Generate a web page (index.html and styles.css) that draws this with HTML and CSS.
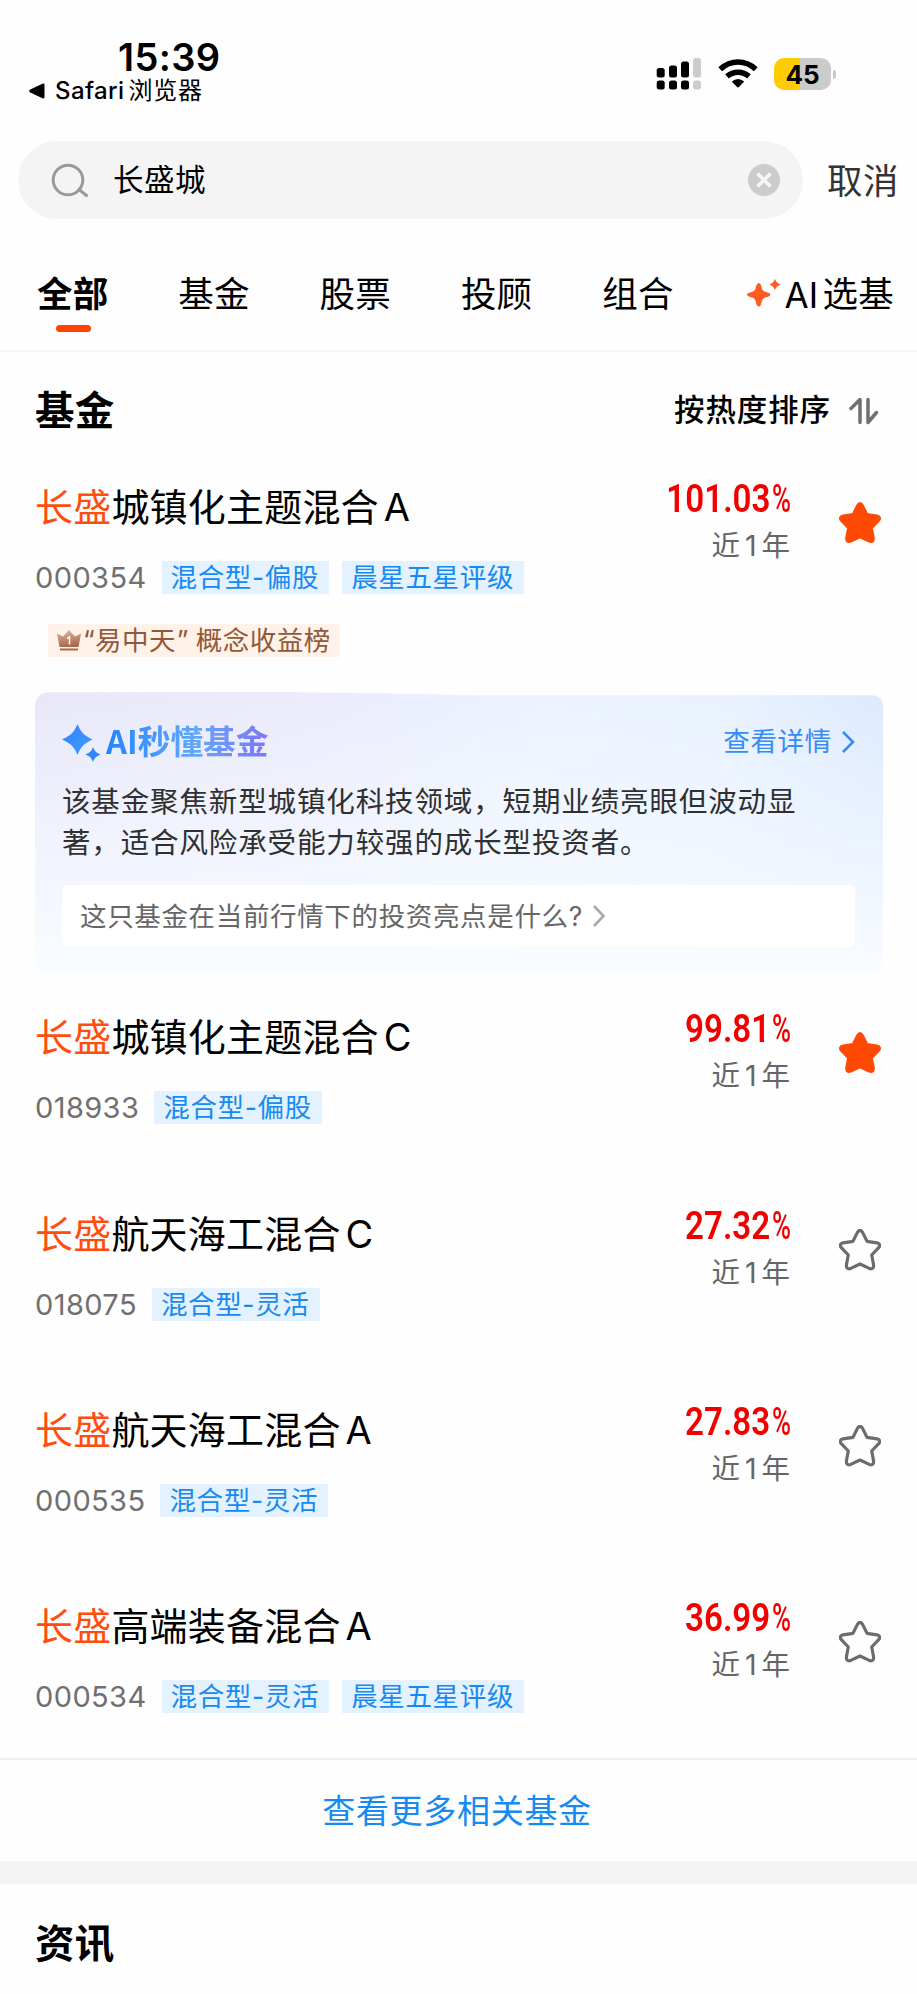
FILE: index.html
```html
<!DOCTYPE html>
<html lang="zh-CN">
<head>
<meta charset="utf-8">
<title>基金搜索</title>
<link rel="stylesheet" href="styles.css">
</head>
<body>
<svg class="defs" width="0" height="0">
  <symbol id="star" viewBox="0 0 42 42"><path d="M18.300 3.600Q21 -1 23.700 3.600L28 12.300L38 13.800Q42.500 15 39.700 18.700L32.700 26L34.600 36Q34.800 41 30.300 39.400L21 35L11.700 39.400Q7.200 41 7.400 36L9.300 26L2.300 18.700Q-.5 15 4 13.800L14 12.300Z"/></symbol>
</svg>
<header class="status">
  <div class="status-left">
    <div class="clock">15:39</div>
    <div class="back"><svg width="16" height="16" viewBox="0 0 16 16"><path d="M1.200 6.600L13.500.7Q15.500 0 15.500 2V14Q15.500 16 13.500 15.300L1.200 9.400Q-.8 8 1.200 6.600Z"/></svg><span class="safari">Safari</span><span class="app">浏览器</span></div>
  </div>
  <div class="status-right">
    <svg class="signal" width="46" height="32" viewBox="0 0 46 32">
      <rect x=".7" y="10" width="8" height="9.500" rx="2.500"/><rect x="13" y="7.500" width="8" height="12" rx="2.500"/><rect x="25" y="3.500" width="8" height="16" rx="2.500"/><rect class="dim" x="37" y="0" width="8" height="19.500" rx="2.500"/>
      <rect x=".7" y="22.500" width="8" height="9" rx="2.500"/><rect x="13" y="22.500" width="8" height="9" rx="2.500"/><rect x="25" y="22.500" width="8" height="9" rx="2.500"/><rect class="dim" x="37" y="22.500" width="8" height="9" rx="2.500"/>
    </svg>
    <svg class="wifi" width="40" height="30" viewBox="0 0 40 30"><path class="arc" d="M2.200 10.200Q10.200 3 20 3T37.800 10.200M9 17.400Q13.700 13.200 20 13.200T31 17.400"/><path d="M13.800 22.600Q20 17.600 26.200 22.600L21.200 27.800Q20 29 18.800 27.800Z"/></svg>
    <div class="battery">45</div><i class="tip"></i>
  </div>
</header>

<div class="search">
  <div class="field">
    <svg width="38" height="34" viewBox="0 0 38 34"><circle cx="17" cy="17" r="14.800"/><path d="M28 26.500L35.500 32.500"/></svg>
    <span class="query">长盛城</span>
    <svg class="clear" width="32" height="32" viewBox="0 0 32 32"><circle cx="16" cy="16" r="16"/><path d="M9.500 9.500L22.500 22.500M22.500 9.500L9.500 22.500"/></svg>
  </div>
  <span class="cancel">取消</span>
</div>

<nav class="tabs">
  <span class="tab active">全部</span><span class="tab">基金</span><span class="tab">股票</span><span class="tab">投顾</span><span class="tab">组合</span>
  <span class="tab ai"><svg width="34" height="28" viewBox="0 0 34 28"><path d="M11.700 4Q14 4 15 10Q16 12 18 12.800Q23.400 14 23.400 15.700Q23.400 17.400 18 18.600Q16 19.400 15 21.500Q14 27.500 11.700 27.500Q9.500 27.500 8.500 21.500Q7.500 19.400 5.500 18.600Q0 17.400 0 15.700Q0 14 5.500 12.800Q7.500 12 8.500 10Q9.500 4 11.700 4ZM28 0C29.300 3.200 30.500 4.200 33.600 5.500C30.500 6.900 29.300 7.900 28 11.200C26.700 7.900 25.500 6.900 22.400 5.500C25.500 4.200 26.700 3.200 28 0Z"/></svg><span class="latin">AI</span><span>选基</span></span>
</nav>

<section>
  <div class="head"><h2>基金</h2><div class="sort"><span>按热度排序</span><svg width="30" height="28" viewBox="0 0 30 28"><path d="M2 11.500L11 2.500V25.500M19 2.500V25.500L27.500 15.500"/></svg></div></div>

  <article class="fund">
    <div class="info"><h3><em>长盛</em>城镇化主题混合<b>A</b></h3><div class="meta"><span class="code">000354</span><span class="tag">混合型-偏股</span><span class="tag">晨星五星评级</span></div></div>
    <div class="gain"><div class="pct"><span class="num">101.03</span><span class="unit">%</span></div><div class="term">近<span>1</span>年</div></div>
    <svg class="star on"><use href="#star"/></svg>
  </article>
  <div class="rank"><svg width="24" height="21" viewBox="0 0 24 21"><defs><linearGradient id="crown" x2=".2" y2="1"><stop stop-color="#dcb9a5"/><stop offset="1" stop-color="#a96a4c"/></linearGradient></defs><path fill="url(#crown)" d="M0 3.500L6 6.500L12 0L18 6.500L24 3.500L21.500 17H2.500Z"/><path fill="#a66a4e" d="M3 18.500H21V20.500H3Z"/><path d="M10 8.500L12.500 7V14.500" fill="none" stroke="#fff3ea" stroke-width="1.600"/></svg><span class="open">“</span><span>易中天</span><span class="close">”</span><span>概念收益榜</span></div>

  <div class="card">
    <div class="card-head">
      <svg width="40" height="38" viewBox="0 0 40 38"><defs><linearGradient id="spark" y2="1"><stop stop-color="#2f80ff"/><stop offset="1" stop-color="#3fa0fb"/></linearGradient></defs><path fill="url(#spark)" d="M15.500 0C19 8.500 22 11.500 30.500 15.500C22 19.500 19 22.500 15.500 31C12 22.500 9 19.500 0 15.500C9 11.500 12 8.500 15.500 0Z"/><path fill="#2f86ff" d="M31 23C32.700 27.500 34.300 28.800 38.500 30.500C34.300 32.200 32.700 33.500 31 38C29.300 33.500 27.700 32.200 23.500 30.500C27.700 28.800 29.300 27.500 31 23Z"/></svg>
      <strong>AI秒懂基金</strong>
      <span class="detail"><span>查看详情</span><svg width="14" height="24" viewBox="0 0 14 24"><path d="M2 2L12 12L2 22"/></svg></span>
    </div>
    <p>该基金聚焦新型城镇化科技领域，短期业绩亮眼但波动显著，适合风险承受能力较强的成长型投资者。</p>
    <div class="ask"><span>这只基金在当前行情下的投资亮点是什么?</span><svg width="14" height="24" viewBox="0 0 14 24"><path d="M2 2L11.500 12L2 22"/></svg></div>
  </div>

  <article class="fund">
    <div class="info"><h3><em>长盛</em>城镇化主题混合<b>C</b></h3><div class="meta"><span class="code">018933</span><span class="tag">混合型-偏股</span></div></div>
    <div class="gain"><div class="pct"><span class="num">99.81</span><span class="unit">%</span></div><div class="term">近<span>1</span>年</div></div>
    <svg class="star on"><use href="#star"/></svg>
  </article>
  <article class="fund">
    <div class="info"><h3><em>长盛</em>航天海工混合<b>C</b></h3><div class="meta"><span class="code">018075</span><span class="tag">混合型-灵活</span></div></div>
    <div class="gain"><div class="pct"><span class="num">27.32</span><span class="unit">%</span></div><div class="term">近<span>1</span>年</div></div>
    <svg class="star"><use href="#star"/></svg>
  </article>
  <article class="fund">
    <div class="info"><h3><em>长盛</em>航天海工混合<b>A</b></h3><div class="meta"><span class="code">000535</span><span class="tag">混合型-灵活</span></div></div>
    <div class="gain"><div class="pct"><span class="num">27.83</span><span class="unit">%</span></div><div class="term">近<span>1</span>年</div></div>
    <svg class="star"><use href="#star"/></svg>
  </article>
  <article class="fund last">
    <div class="info"><h3><em>长盛</em>高端装备混合<b>A</b></h3><div class="meta"><span class="code">000534</span><span class="tag">混合型-灵活</span><span class="tag">晨星五星评级</span></div></div>
    <div class="gain"><div class="pct"><span class="num">36.99</span><span class="unit">%</span></div><div class="term">近<span>1</span>年</div></div>
    <svg class="star"><use href="#star"/></svg>
  </article>
  <div class="more">查看更多相关基金</div>
</section>
<section class="news"><h2>资讯</h2></section>
</body>
</html>
```
FILE: styles.css
```css
* { box-sizing: border-box; }
body { margin: 0; width: 917px; height: 1994px; overflow: hidden; background: #fefefe; color: #000; font-family: Inter, "Noto Sans CJK SC", sans-serif; }
svg { flex: none; display: block; }
.defs { position: absolute; }
h2, h3, p { margin: 0; }

.status { height: 141px; display: flex; justify-content: space-between; padding: 39px 81px 0 29px; }
.clock { margin-left: 89px; font-size: 38px; font-weight: 600; line-height: 36px; letter-spacing: .4px; }
.back { display: flex; align-items: center; height: 28px; margin-top: 2px; font-size: 24px; line-height: 26px; font-weight: 500; }
.safari { margin: 0 4px 0 10px; letter-spacing: .4px; }
.app { font-weight: 400; line-height: 24px; letter-spacing: .7px; }
.status-right { display: flex; align-items: center; height: 32px; margin-top: 19px; }
.signal { margin-right: 1px; }
.signal .dim { fill: #ccc; }
.wifi { margin: 0 16px 0 15px; }
.wifi .arc { fill: none; stroke: #000; stroke-width: 5.500; }
.battery { width: 57px; height: 32px; border-radius: 10px; background: linear-gradient(90deg, #ffcc02 26px, #cbcbcb 26px); font-size: 26px; font-weight: 700; line-height: 33px; text-align: center; }
.tip { width: 3px; height: 9px; margin-left: 2px; border-radius: 0 4px 4px 0; background: #c8c8c8; }

.search { display: flex; align-items: center; height: 78px; padding-left: 18px; }
.field { display: flex; align-items: center; width: 785px; height: 78px; padding: 0 23px 0 33px; border-radius: 39px; background: #f4f4f4; }
.field svg { fill: none; stroke: #999; stroke-width: 3; stroke-linecap: round; }
.query { flex: 1; margin-left: 24px; font-size: 30.500px; line-height: 40px; letter-spacing: .5px; }
.field .clear { stroke: #f6f6f6; stroke-width: 3.500; stroke-linecap: butt; }
.clear circle { fill: #ccc; stroke: none; }
.cancel { margin-left: 24px; padding-top: 3px; font-size: 35.500px; line-height: 46px; letter-spacing: .5px; color: #333; }

.tabs { display: flex; height: 133px; padding: 52px 0 0 37px; border-bottom: 2px solid #f7f7f7; font-size: 35.500px; line-height: 48px; letter-spacing: .2px; }
.tab { flex: none; width: 141.300px; }
.active { font-weight: 700; }
.active::after { content: ""; display: block; width: 35px; height: 7px; margin: 6px 0 0 19px; border-radius: 4px; background: #ff4400; }
.ai { display: flex; width: auto; padding-left: 4px; }
.ai svg { margin-top: 8px; fill: #ff5a1f; }
.latin { margin: 0 3px 0 3px; letter-spacing: 0; width: 35px; font-size: 35px; }

.head { display: flex; justify-content: space-between; align-items: center; height: 118px; padding: 0 38px 0 35px; }
h2 { font-size: 39.500px; line-height: 56px; font-weight: 700; letter-spacing: .2px; }
.sort { display: flex; align-items: center; font-size: 30.500px; line-height: 40px; font-weight: 500; letter-spacing: .9px; }
.sort span { padding-bottom: 2px; }
.sort svg { margin-left: 18px; fill: none; stroke: #707070; stroke-width: 3.500; stroke-linecap: round; stroke-linejoin: round; }

.fund { display: flex; height: 196.300px; padding: 15px 36px 0 35px; }
.fund.last { height: 169.100px; }
.info { flex: 1; }
h3 { height: 44px; font-size: 38px; line-height: 44px; font-weight: 400; letter-spacing: .2px; white-space: nowrap; }
em { font-style: normal; color: #ff4d0d; }
b { margin-left: 5px; font-weight: 400; }
.meta { display: flex; align-items: center; height: 33px; margin-top: 32px; }
.code { margin-right: 15px; font-size: 29px; color: #707070; letter-spacing: .4px; }
.tag { height: 33px; margin-right: 13px; padding: 0 10px 0 9px; background: #e4f1ff; color: #168af0; font-size: 26.500px; line-height: 33px; letter-spacing: .65px; }
.gain { width: 160px; color: #666; }
.pct { display: flex; justify-content: flex-end; height: 28px; color: #f20000; font-family: Roboto, sans-serif; font-size: 39px; line-height: 28px; font-weight: 600; }
.num { transform: scaleX(.85); transform-origin: right; }
.unit { width: 19px; margin-left: 2px; font-weight: 500; transform: scaleX(.66); transform-origin: left; }
.term { height: 36px; margin-top: 15px; font-size: 28.500px; line-height: 36px; text-align: right; white-space: nowrap; padding-right: 1px; }
.term span { margin: 0 5px; }
.star { width: 42px; height: 42px; margin: 17px 0 0 48px; fill: none; stroke: #6c6c6c; stroke-width: 3.200; stroke-linejoin: round; overflow: visible; }
.star.on { fill: #ff4a06; stroke: #ff4a06; stroke-width: 2.500; }

.rank { display: flex; align-items: center; width: 292px; height: 33px; margin: -42px 0 0 48px; padding-left: 9px; background: #fff2e8; color: #92583a; font-size: 26.500px; line-height: 33px; letter-spacing: .45px; white-space: nowrap; }
.open { width: 14px; text-align: right; }
.close { width: 20px; padding-left: 1px; }

.card { width: 848px; height: 281px; margin: 35px 0 27px 35px; padding: 30px 28px 0 27px; border-radius: 14px; background: linear-gradient(180deg, rgba(247,251,255,0) 0, rgba(246,250,255,.75) 65%, #f9fcff 100%), linear-gradient(100deg, #e8e7fa 0, #ebebfb 30%, #ecf3ff 58%, #e8f1ff 78%, #d8e7ff 100%); clip-path: path("M0 14Q0 0 14 0H260Q360 1 430 3H836Q848 3 848 15V281H0Z"); }
.card-head { display: flex; height: 42px; align-items: center; }
.card-head strong { margin: -6px 0 0 4px; font-family: "Noto Sans CJK SC", sans-serif; font-size: 32.700px; line-height: 44px; font-weight: 700; background: linear-gradient(90deg, #2585ff, #62a8fa 55%, #8074f8); -webkit-background-clip: text; background-clip: text; color: transparent; }
.detail { display: flex; align-items: center; margin-left: auto; color: #378cf5; font-size: 26.500px; line-height: 36px; letter-spacing: .7px; }
.detail span { padding-bottom: 4px; }
.detail svg { margin: -2px 0 0 9px; fill: none; stroke: #378cf5; stroke-width: 2.600; }
.card p { margin-top: 17px; font-size: 28.500px; line-height: 41px; letter-spacing: .87px; color: #303030; width: 760px; }
.ask { display: flex; align-items: center; height: 62px; margin-top: 22px; padding-left: 18px; border-radius: 5px; background: #fff; color: #666; font-size: 26.500px; line-height: 36px; letter-spacing: .65px; }
.ask span { padding-bottom: 1px; }
.ask svg { margin-left: 9px; fill: none; stroke: #aaa; stroke-width: 2.600; }

.more { height: 103px; padding-right: 3px; border-top: 2px solid #eee; color: #168af0; font-size: 33px; line-height: 103px; letter-spacing: .7px; text-align: center; }
.news { border-top: 23px solid #f4f4f4; padding: 32px 35px; }
```
